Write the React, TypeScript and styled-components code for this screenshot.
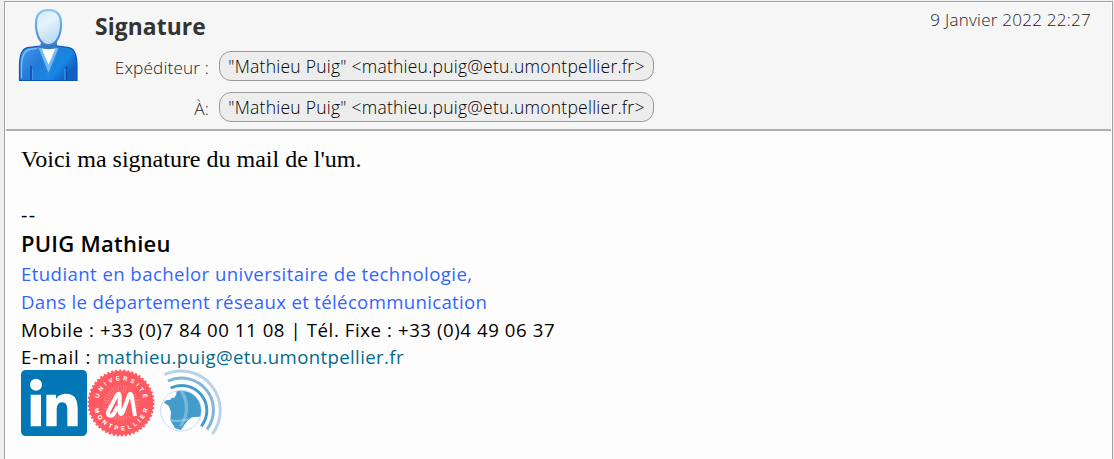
import React from 'react';
import styled, { createGlobalStyle } from 'styled-components';

const GlobalStyle = createGlobalStyle`
  *, *::before, *::after { box-sizing: border-box; }
  body { margin: 0; background: #efefef; }
`;

const Page = styled.div`
  height: 459px;
  padding: 1px 1px 0 4px;
  overflow: hidden;
  background: #efefef;
`;

const Message = styled.article`
  height: 458px;
  border: 1px solid #a3a3a3;
  border-bottom: 0;
  padding: 1px 1px 0;
  background: #fdfdfd;
`;

const Header = styled.header`
  display: flex;
  height: 128px;
  padding: 6px 20px 0 12px;
  background: #f6f6f6;
  border-bottom: 2px solid #b0b0b0;
  font-family: 'Open Sans', 'Noto Sans', sans-serif;
  color: #333;
`;

const Avatar = styled.svg`
  flex: none;
  width: 60px;
  height: 72px;
`;

const Summary = styled.div`
  flex: 1;
  margin-left: 16px;
`;

const Subject = styled.h1`
  margin: 2px 0 0 1px;
  font-size: 22.8px;
  line-height: 32px;
  font-weight: 700;
  letter-spacing: 0.1px;
`;

const Field = styled.div<{ $gap: number }>`
  display: flex;
  align-items: center;
  height: 30px;
  margin-top: ${(p) => p.$gap}px;
`;

const Label = styled.span`
  width: 115px;
  text-align: right;
  white-space: nowrap;
  font-size: 17.2px;
  font-weight: 300;
  line-height: 24px;
  padding-top: 3px;
  letter-spacing: 0.15px;
  color: #222;
`;

const Chip = styled.span`
  display: flex;
  align-items: center;
  justify-content: center;
  width: 435px;
  height: 30px;
  margin-left: 10px;
  padding-bottom: 1px;
  border: 1px solid #999;
  border-radius: 12px;
  background: #ededed;
  color: #000;
  font-size: 17.5px;
  font-weight: 300;
  letter-spacing: 0.24px;
  white-space: nowrap;
`;

const DateText = styled.time`
  margin-top: -1px;
  font-size: 17px;
  font-weight: 300;
  line-height: 24px;
  letter-spacing: 0.26px;
  color: #222;
  white-space: nowrap;
`;

const Body = styled.div`
  padding: 11px 15px 0;
  color: #000;
`;

const Greeting = styled.p`
  margin: 0 0 27px;
  font: 24px/34px 'Liberation Serif', serif;
`;

const Signature = styled.div`
  font-family: 'Open Sans', 'Noto Sans', sans-serif;
`;

const Line = styled.div<{ $size?: number; $height?: number; $weight?: number; $spacing?: number; $color?: string }>`
  font-size: ${(p) => p.$size ?? 18.6}px;
  line-height: ${(p) => p.$height ?? 28}px;
  height: ${(p) => p.$height ?? 28}px;
  font-weight: ${(p) => p.$weight ?? 400};
  letter-spacing: ${(p) => p.$spacing ?? 0}px;
  color: ${(p) => p.$color ?? '#000'};
  white-space: nowrap;
`;

const Mail = styled.a`
  color: #046a8c;
  letter-spacing: 0.37px;
  text-decoration: none;
`;

const Logos = styled.div`
  display: flex;
  height: 66px;
  margin-top: -1px;
`;

const Logo = styled.svg<{ $gap?: number }>`
  width: 66px;
  height: 66px;
  margin-left: ${(p) => p.$gap ?? 0}px;
  overflow: visible;
`;

const UserPicture = () => (
  <Avatar viewBox="0 0 60 72">
    <defs>
      <linearGradient id="head" x1="0" y1="0" x2="0.4" y2="1">
        <stop offset="0" stopColor="#cfe9fa" />
        <stop offset="0.45" stopColor="#e6f3fb" />
        <stop offset="1" stopColor="#b9dcf4" />
      </linearGradient>
      <linearGradient id="rim" x1="0" y1="0" x2="0" y2="1">
        <stop offset="0" stopColor="#8fc4f5" />
        <stop offset="1" stopColor="#3f82d2" />
      </linearGradient>
      <linearGradient id="coat" x1="0" y1="0" x2="1" y2="0.5">
        <stop offset="0" stopColor="#4b9fee" />
        <stop offset="0.45" stopColor="#2379d6" />
        <stop offset="0.8" stopColor="#1787e5" />
        <stop offset="1" stopColor="#1260bf" />
      </linearGradient>
    </defs>
    <path d="M23 31h16v10H23z" fill="#3c7fce" />
    <path d="M1.500 71.500V57c0-10 2-17 8-18.300L22 37h18l11 1.700C57 40 59 47 59 57v14.500z" fill="url(#coat)" stroke="#0b55bd" strokeWidth="1.200" />
    <path d="M3.500 69V57c0-8 2.500-15 8-16.500l10-1.300" fill="none" stroke="#76bdf8" strokeWidth="1.300" />
    <path d="M22 39.500h17L30.500 56z" fill="#fff" />
    <path d="M22 39l8.500 21L39 39" fill="none" stroke="#71bdf0" strokeWidth="2.800" />
    <path d="M19.500 39l11 28L41.500 39" fill="none" stroke="#2c86dc" strokeWidth="1.200" />
    <path d="M13 71V57M48.500 71V57" stroke="#0c4eae" strokeWidth="1.600" />
    <path d="M14.600 71V60M46.900 71V60" stroke="#3998ed" strokeWidth="1.200" />
    <path d="M22.500 34c3 5 13 5 16 0v4c-4 3-12 3-16 0z" fill="#3a7cc0" />
    <path d="M30.500 1C40 1 43.500 7 43 17c-.7 12-6 19-12.500 19S18.700 29 18 17C17.500 7 21 1 30.500 1z" fill="url(#head)" stroke="url(#rim)" strokeWidth="2.200" />
  </Avatar>
);

const LinkedInLogo = () => (
  <Logo viewBox="33 15 198 198">
    <rect x="33" y="15" width="198" height="198" rx="14" fill="#0177b5" />
    <g fill="#fff">
      <circle cx="78" cy="59" r="18" />
      <path d="M62 89h31v95H62zM109 89h29v13c5-9 15-16 30-16 28 0 35 19 35 46v52h-31v-47c0-14-2-25-15-25s-17 10-17 25v47h-31z" />
    </g>
  </Logo>
);

const rays = Array.from({ length: 36 }, (_, i) => i * 10);

const UniversityLogo = () => (
  <Logo viewBox="9 15 198 198">
    <circle cx="111" cy="114" r="97" fill="#ff5a62" />
    <circle cx="111" cy="114" r="97" fill="none" stroke="#ff5a62" strokeWidth="7" strokeDasharray="6 6.190" />
    {rays.map((angle) => (
      <path key={angle} d="M111 82V60" stroke="#ff9a9e" strokeWidth="1.500" transform={`rotate(${angle} 111 114)`} />
    ))}
    <path id="seal-top" d="M43 114a68 68 0 0 1 136 0" fill="none" />
    <path id="seal-bottom" d="M29 114a82 82 0 0 0 164 0" fill="none" />
    <g fill="#fff" fontFamily="Liberation Sans, sans-serif" fontSize="18" fontWeight="700" textAnchor="middle">
      <text textLength="186"><textPath href="#seal-top" startOffset="50%" textLength="186">UNIVERSITÉ</textPath></text>
      <text textLength="222"><textPath href="#seal-bottom" startOffset="50%" textLength="222">MONTPELLIER</textPath></text>
    </g>
    <path d="M64 150L97 76h15l10 26 8-26h14l18 78z" fill="#ff5a62" />
    <path d="M107 104V94Q106 80 98 91L73 139Q69 151 79 152 87 152 91 144L101 124M107 92V139Q108 152 116 143L135 91Q139 81 143 92L153 153" fill="none" stroke="#fff" strokeWidth="12" strokeLinejoin="round" />
  </Logo>
);

const GlobeLogo = () => (
  <Logo $gap={4} viewBox="6 15 198 198">
    <defs>
      <clipPath id="globe"><circle cx="78" cy="137" r="60" /></clipPath>
    </defs>
    <circle cx="78" cy="137" r="61" fill="#fff" stroke="#c4def0" strokeWidth="3" />
    <g clipPath="url(#globe)">
      <path d="M66 70H160V155H131L111 157 97 168 88 180 78 195 60 190 46 165 48 142 42 124 26 112 34 106 46 104 50 98 58 98 64 88z" fill="#439ccb" />
      <path d="M84 76Q116 128 82 184L72 184Q106 131 74 79z" fill="#8cc2e2" opacity=".75" />
      <path d="M46 162Q70 170 105 158L98 166Q70 174 46 168z" fill="#b3d8ed" opacity=".6" />
    </g>
    <g fill="none">
      <path d="M28 29A118 118 0 0 1 172 207" stroke="#b9d2e7" strokeWidth="9" />
      <path d="M39 48A96 96 0 0 1 156 193" stroke="#82b5d9" strokeWidth="9" />
      <path d="M47 69A75.500 75.500 0 0 1 139 184" stroke="#429bcb" strokeWidth="9" />
    </g>
  </Logo>
);

export default function App() {
  return (
    <Page>
      <GlobalStyle />
      <Message>
        <Header>
          <UserPicture />
          <Summary>
            <Subject>Signature</Subject>
            <Field $gap={8}>
              <Label>Expéditeur :</Label>
              <Chip>"Mathieu Puig" &lt;mathieu.puig@etu.umontpellier.fr&gt;</Chip>
            </Field>
            <Field $gap={11}>
              <Label>À:</Label>
              <Chip>"Mathieu Puig" &lt;mathieu.puig@etu.umontpellier.fr&gt;</Chip>
            </Field>
          </Summary>
          <DateText>9 Janvier 2022 22:27</DateText>
        </Header>
        <Body>
          <Greeting>Voici ma signature du mail de l'um.</Greeting>
          <Signature>
            <Line $height={23} $weight={500} $size={20} $spacing={1.4}>--</Line>
            <Line $size={22} $height={34} $weight={600} $spacing={0.25}>PUIG Mathieu</Line>
            <Line $color="#3366ff" $spacing={0.42}>Etudiant en bachelor universitaire de technologie,</Line>
            <Line $color="#3366ff" $spacing={0.33}>Dans le département réseaux et télécommunication</Line>
            <Line $height={27} $spacing={0.59}>Mobile : +33 (0)7 84 00 11 08 | Tél. Fixe : +33 (0)4 49 06 37</Line>
            <Line $spacing={0.9}>E-mail : <Mail>mathieu.puig@etu.umontpellier.fr</Mail></Line>
          </Signature>
          <Logos>
            <LinkedInLogo />
            <UniversityLogo />
            <GlobeLogo />
          </Logos>
        </Body>
      </Message>
    </Page>
  );
}
